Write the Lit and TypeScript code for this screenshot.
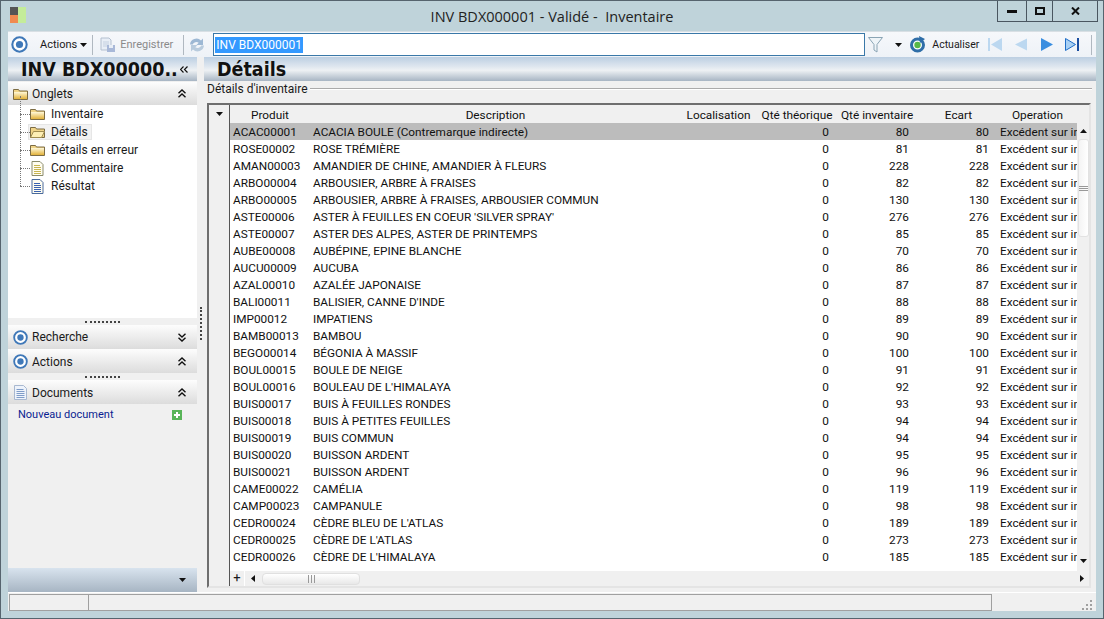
import { LitElement, html, css, svg } from "lit";
import { customElement } from "lit/decorators.js";

const rows: [string, string, number][] = [
  ["ACAC00001", "ACACIA BOULE (Contremarque indirecte)", 80],
  ["ROSE00002", "ROSE TRÉMIÈRE", 81],
  ["AMAN00003", "AMANDIER DE CHINE, AMANDIER À FLEURS", 228],
  ["ARBO00004", "ARBOUSIER, ARBRE À FRAISES", 82],
  ["ARBO00005", "ARBOUSIER, ARBRE À FRAISES, ARBOUSIER COMMUN", 130],
  ["ASTE00006", "ASTER À FEUILLES EN COEUR 'SILVER SPRAY'", 276],
  ["ASTE00007", "ASTER DES ALPES, ASTER DE PRINTEMPS", 85],
  ["AUBE00008", "AUBÉPINE, EPINE BLANCHE", 70],
  ["AUCU00009", "AUCUBA", 86],
  ["AZAL00010", "AZALÉE JAPONAISE", 87],
  ["BALI00011", "BALISIER, CANNE D'INDE", 88],
  ["IMP00012", "IMPATIENS", 89],
  ["BAMB00013", "BAMBOU", 90],
  ["BEGO00014", "BÉGONIA À MASSIF", 100],
  ["BOUL00015", "BOULE DE NEIGE", 91],
  ["BOUL00016", "BOULEAU DE L'HIMALAYA", 92],
  ["BUIS00017", "BUIS À FEUILLES RONDES", 93],
  ["BUIS00018", "BUIS À PETITES FEUILLES", 94],
  ["BUIS00019", "BUIS COMMUN", 94],
  ["BUIS00020", "BUISSON ARDENT", 95],
  ["BUIS00021", "BUISSON ARDENT", 96],
  ["CAME00022", "CAMÉLIA", 119],
  ["CAMP00023", "CAMPANULE", 98],
  ["CEDR00024", "CÈDRE BLEU DE L'ATLAS", 189],
  ["CEDR00025", "CÈDRE DE L'ATLAS", 273],
  ["CEDR00026", "CÈDRE DE L'HIMALAYA", 185],
];

const folder = (open = false) => svg`<svg class="ic" width="15" height="12" viewBox="0 0 15 12">
  <defs><linearGradient id="fg" x1="0" y1="0" x2="0" y2="1"><stop offset="0" stop-color="#fff8d8"/><stop offset="1" stop-color="#e2b23c"/></linearGradient></defs>
  <path d="M.5 1.500h5l1 1.500h8v8.500H.5z" fill="#f0d488" stroke="#7c6c44"/>
  ${open
    ? svg`<path d="M.5 11.500l3-6h11l-3 6z" fill="#fdeeb4" stroke="#a08c50"/>`
    : svg`<rect x="1" y="4" width="13" height="7" fill="url(#fg)"/>`}
</svg>`;

const doc = (dark = false) => svg`<svg class="ic" width="12" height="15" viewBox="0 0 12 15">
  <path d="M.5.5h8l3 3v11H.5z" fill="#fffdf0" stroke="${dark ? "#4a6a9c" : "#8a8a6a"}"/>
  <path d="M2.500 4.500h6M2.500 6.500h7M2.500 8.500h7M2.500 10.500h7M2.500 12.500h7" stroke="${dark ? "#3a62b0" : "#c8b450"}"/>
</svg>`;

const docBlue = svg`<svg class="ic" width="13" height="15" viewBox="0 0 13 15">
  <path d="M.5.5h9l3 3v11H.5z" fill="#eef3fb" stroke="#a8b8d0"/>
  <path d="M2.500 4.500h7M2.500 6.500h8M2.500 8.500h8M2.500 10.500h8M2.500 12.500h8" stroke="#7f9cc8"/>
</svg>`;

const target = (s = 17) => svg`<svg width="${s}" height="${s}" viewBox="0 0 18 18">
  <circle cx="9" cy="9" r="7.600" fill="#fff" stroke="#3f78b8" stroke-width="2.200"/>
  <circle cx="9" cy="9" r="3.800" fill="#3f78b8"/>
</svg>`;

const chevUp = svg`<svg width="8" height="9" viewBox="0 0 8 9"><path d="M.5 4.200L4 1l3.500 3.200M.5 8.200L4 5l3.500 3.200" fill="none" stroke="#111" stroke-width="1.400"/></svg>`;
const chevDown = svg`<svg width="8" height="9" viewBox="0 0 8 9"><path d="M.5.800L4 4l3.500-3.200M.5 4.800L4 8l3.500-3.200" fill="none" stroke="#111" stroke-width="1.400"/></svg>`;
const caret = svg`<svg width="7" height="4" viewBox="0 0 7 4"><path d="M0 0h7L3.500 4z" fill="#111"/></svg>`;

@customElement("app-root")
export class AppRoot extends LitElement {
  static styles = css`
    :host { display: block; width: 1104px; height: 619px; overflow: hidden; font-family: Roboto, "Noto Sans", sans-serif; font-size: 12px; color: #1a1a1a; }
    * { box-sizing: border-box; }
    .win { width: 1104px; height: 619px; background: #bfd3da; border: 1px solid #56646e; display: flex; flex-direction: column; padding: 0 7px 7px; }
    .titlebar { height: 30px; flex: none; display: flex; position: relative; align-items: center; justify-content: center; font-size: 14.500px; color: #222; font-family: "Open Sans", "Noto Sans", sans-serif; white-space: pre; }
    .logo { position: absolute; left: 2px; top: 6px; width: 16px; height: 16px; display: grid; grid-template-columns: 8px 8px; grid-template-rows: 8px 8px; }
    .btns { position: absolute; right: -2px; top: 0; height: 21px; display: flex; border: 1px solid #4a5660; border-top: none; }
    .btns div { display: flex; align-items: center; justify-content: center; border-left: 1px solid #4a5660; }
    .btns div:first-child { width: 28px; border-left: none; }
    .btns div:nth-child(2) { width: 26px; }
    .btns div:nth-child(3) { width: 45px; }
    .content { flex: 1; display: flex; flex-direction: column; background: #f0f0f0; min-height: 0; }
    .toolbar { height: 26px; flex: none; display: flex; align-items: center; background: linear-gradient(#f6f8fb, #eef2f7); border-top: 1px solid #d8dfe4; font-size: 11px; padding-left: 3px; }
    .sep { width: 1px; height: 20px; background: #b0b8c0; flex: none; }
    .disabled { color: #8a8a8a; }
    .search { width: 652px; height: 23px; border: 1px solid #3a78a8; background: #fff; display: flex; align-items: center; padding-left: 1px; font-size: 12px; margin: 0 3px 0 8px; flex: none; }
    .search span { background: #3399ff; color: #fff; padding: 0 1px; line-height: 16px; }
    .nav { display: flex; flex: none; margin-left: 9px; }
    .panes { flex: 1; display: flex; min-height: 0; }
    .side { width: 189px; flex: none; display: flex; flex-direction: column; }
    .bluehead { height: 24px; flex: none; background: linear-gradient(#bccfe2 0%, #dfe7ef 40%, #eef1f4 55%, #a7b5c3 100%); font-weight: 700; font-size: 19.500px; line-height: 25px; color: #111; font-family: "DejaVu Sans Condensed", "Noto Sans", sans-serif; position: relative; }
    .sidetitle { padding-left: 13px; white-space: nowrap; }
    .dbl { position: absolute; right: 9px; top: 9px; line-height: 0; }
    .sect { height: 24px; flex: none; background: linear-gradient(#fdfdfd, #dcdcdc); display: flex; align-items: center; padding: 0 11px 0 5px; font-size: 12px; gap: 4px; }
    .sect .lbl { flex: 1; }
    .sect .low { padding-top: 2px; }
    .sect > svg:first-child { width: 15px; flex: none; }
    .first { height: 23px; margin-top: 1px; }
    .tree { height: 213px; flex: none; background: #fff; padding: 0 0 0 12px; }
    .tree-row { height: 18px; display: flex; align-items: center; position: relative; padding-left: 10px; gap: 6px; }
    .tree-row::before { content: ""; position: absolute; left: 0; top: 9px; width: 10px; border-top: 1px dotted #777; }
    .tree-row::after { content: ""; position: absolute; left: 0; top: -9px; height: 18px; border-left: 1px dotted #777; }
    .tree-row .ic { flex: none; width: 15px; }
    .selbox { display: flex; align-items: center; gap: 6px; background: #f2f2f2; border: 1px solid #e6e6e6; height: 16px; padding: 0 3px 0 1px; margin-left: -2px; }
    .dots { height: 7px; flex: none; display: flex; align-items: center; justify-content: center; }
    .dots i { width: 35px; border-top: 2px dotted #444; }
    .docs { flex: 1; padding: 3px 15px 0 10px; color: #0a1e90; font-size: 11px; display: flex; justify-content: space-between; align-items: flex-start; line-height: 15px; }
    .plus { margin-top: 3px; }
    .bottom { height: 24px; flex: none; background: linear-gradient(#d8e3ee, #a7b5c3); display: flex; justify-content: flex-end; align-items: center; padding-right: 11px; }
    .split { width: 7px; flex: none; position: relative; }
    .split i { position: absolute; left: 3px; top: 250px; height: 33px; border-left: 2px dotted #444; }
    .main { flex: 1; min-width: 0; display: flex; flex-direction: column; }
    .maintitle { padding-left: 13px; }
    .legend { height: 22px; flex: none; display: flex; align-items: center; padding: 0 4px 6px 3px; gap: 2px; }
    .legend i { flex: 1; border-top: 1px solid #aaa; border-bottom: 1px solid #fff; }
    .gridbox { margin: 0 5px 0 3px; height: 485px; flex: none; border: 2px solid #6e6e6e; border-right-color: #e4e4e4; border-bottom-color: #e4e4e4; display: flex; background: #f0f0f0; }
    .rowhdr { width: 21px; flex: none; border-right: 1px solid #555; }
    .rowhdr .top { height: 18px; display: flex; align-items: center; justify-content: center; }
    .gridmain { flex: 1; min-width: 0; display: flex; flex-direction: column; }
    .upper { flex: 1; display: flex; min-height: 0; }
    .table { width: 847px; flex: none; overflow: hidden; background: #fff; }
    .tr { display: grid; grid-template-columns: 80px 371px 75px 80px 80px 80px 81px; height: 17px; white-space: nowrap; line-height: 19px; font-size: 11.800px; color: #111; }
    .tr.head { height: 18px; line-height: 21px; background: #f0f0f0; }
    .tr.head div { text-align: center; overflow: hidden; }
    .tr.head div:nth-child(n+4) { padding-left: 5px; }
    .tr.head div:nth-child(6) { padding-left: 8px; }
    .tr.selrow { background: #bcbcbc; }
    .tr div { padding: 0 3px; overflow: hidden; }
    .tr div.num { text-align: right; padding-right: 7px; }
    .tr div.op { padding-left: 4px; }
    .vbar { flex: 1; background: #f0f0f0; display: flex; flex-direction: column; align-items: center; }
    .vbtn { height: 16px; width: 12px; display: flex; align-items: center; justify-content: center; flex: none; }
    .thumb { width: 11px; height: 98px; background: linear-gradient(90deg, #f4f4f4, #fff); border: 1px solid #e2e2e2; border-radius: 3px; display: flex; align-items: center; justify-content: center; margin-bottom: auto; }
    .hbar { height: 15px; flex: none; display: flex; align-items: center; background: #f0f0f0; }
    .hbar-plus { width: 15px; height: 15px; flex: none; text-align: center; line-height: 13px; font-size: 13px; border-right: 1px solid #fff; }
    .harr { width: 15px; height: 15px; display: flex; align-items: center; justify-content: center; flex: none; }
    .hthumb { width: 98px; height: 12px; background: linear-gradient(#fff, #e8e8e8); border: 1px solid #e0e0e0; border-radius: 4px; margin-left: 2px; display: flex; align-items: center; justify-content: center; }
    .status { height: 19px; flex: none; background: #f0f0f0; display: flex; border-top: 1px solid #fff; padding: 1px 0 1px 1px; }
    .status div { border: 1px solid #a0a0a0; height: 17px; }
    .status .s1 { width: 80px; }
    .status .s2 { width: 903px; border-left: none; }
    .status .s3 { flex: 1; border: none; position: relative; }
    .grip { position: absolute; right: 4px; bottom: 1px; }
    .c-text { white-space: nowrap; }
    .tight { font-size: 10.500px; }
    .box { display: flex; flex: none; }
  `;

  render() {
    return html`<div class="win">
      <div class="titlebar">
        <div class="logo"><span style="background:#555"></span><span style="background:#c4ec9a"></span><span style="background:#f08a50"></span><span style="background:#c4ec9a"></span></div>
        <span>INV BDX000001 - Validé -  Inventaire</span>
        <div class="btns">
          <div><svg width="10" height="3"><rect width="10" height="3" fill="#111"/></svg></div>
          <div><svg width="10" height="8"><rect x="1" y="1" width="8" height="6" fill="none" stroke="#111" stroke-width="2"/></svg></div>
          <div><svg width="9" height="8" viewBox="0 0 9 8"><path d="M1 .5l7 7M8 .5l-7 7" stroke="#111" stroke-width="2"/></svg></div>
        </div>
      </div>
      <div class="content">
        <div class="toolbar">
          ${target(17)}
          <span class="c-text" style="margin-left:12px">Actions</span>
          <span class="box" style="margin:0 5px 0 3px">${caret}</span>
          <div class="sep"></div>
          <span class="box" style="margin:0 4px 0 7px"><svg width="16" height="16" viewBox="0 0 16 16"><path d="M1 1h8l2 2v10H1z" fill="#e8eef6" stroke="#b4c0d0"/><path d="M3 5h6M3 7h6M3 9h4" stroke="#c4d0e0"/><rect x="7" y="8" width="8" height="7" fill="#a8b8d8"/><rect x="9" y="8" width="4" height="3" fill="#e8eef6"/></svg></span>
          <span class="disabled c-text">Enregistrer</span>
          <div class="sep" style="margin-left:10px"></div>
          <span class="box" style="margin-left:5px"><svg width="16" height="16" viewBox="0 0 16 16"><path d="M1 7.500a6.500 6.500 0 0 1 11-4l2-2v6.500H7.500l2.200-2.200a4 4 0 0 0-6 1.700z" fill="#9db8d4"/><path d="M15 8.500a6.500 6.500 0 0 1-11 4l-2 2V8h6.500l-2.200 2.200a4 4 0 0 0 6-1.700z" fill="#b8cbdd"/></svg></span>
          <div class="search"><span>INV BDX000001</span></div>
          <svg width="15" height="16" viewBox="0 0 15 16"><path d="M.5.5h14L9 7.500V15l-3-2V7.500z" fill="#eef4f8" stroke="#8aa4b4"/></svg>
          <span class="box" style="margin:0 7px 0 12px">${caret}</span>
          <svg width="17" height="17" viewBox="0 0 17 17"><circle cx="8.500" cy="9" r="6" fill="#fff" stroke="#2f6ea8" stroke-width="3"/><circle cx="8.500" cy="9" r="3.200" fill="#58b848"/><path d="M10 0l6 3-5 4z" fill="#2f6ea8"/></svg>
          <span class="c-text tight" style="margin-left:6px">Actualiser</span>
          <div class="nav" style="gap:12px">
            <svg width="14" height="15" viewBox="0 0 14 15"><rect x="0" y="1" width="2" height="13" fill="#bcd8f0"/><path d="M14 1v13L3 7.500z" fill="#bcd8f0"/></svg>
            <svg width="12" height="15" viewBox="0 0 12 15" style="margin-left:1px"><path d="M12 1.500v12L0 7.500z" fill="#bcd8f0"/></svg>
            <svg width="12" height="15" viewBox="0 0 12 15" style="margin-left:2px"><path d="M0 1v13l12-6.500z" fill="#3a8ee0"/></svg>
            <svg width="14" height="15" viewBox="0 0 14 15"><path d="M.5 1.500v12l10-6z" fill="#a8d0f4" stroke="#1f6ec8"/><rect x="12" y="1" width="2" height="13" fill="#1a4ea0"/></svg>
          </div>
          <div class="sep" style="margin-left:12px"></div>
        </div>
        <div class="panes">
          <div class="side">
            <div class="bluehead"><div class="sidetitle">INV BDX00000..</div><span class="dbl"><svg width="8" height="7" viewBox="0 0 8 7"><path d="M3.500.5L.5 3.500l3 3M7.500.5l-3 3 3 3" fill="none" stroke="#111" stroke-width="1.200"/></svg></span></div>
            <div class="sect first">${folder()}<span class="lbl">Onglets</span>${chevUp}</div>
            <div class="tree">
              <div class="tree-row">${folder()}<span>Inventaire</span></div>
              <div class="tree-row"><span class="selbox">${folder(true)}<span>Détails</span></span></div>
              <div class="tree-row">${folder()}<span>Détails en erreur</span></div>
              <div class="tree-row">${doc()}<span>Commentaire</span></div>
              <div class="tree-row">${doc(true)}<span>Résultat</span></div>
            </div>
            <div class="dots"><i></i></div>
            <div class="sect">${target(15)}<span class="lbl">Recherche</span>${chevDown}</div>
            <div class="sect">${target(15)}<span class="lbl low">Actions</span>${chevUp}</div>
            <div class="dots"><i></i></div>
            <div class="sect">${docBlue}<span class="lbl low">Documents</span>${chevUp}</div>
            <div class="docs"><span>Nouveau document</span>
              <svg class="plus" width="10" height="10" viewBox="0 0 10 10"><rect width="10" height="10" fill="#58b458"/><path d="M2 5h6M5 2v6" stroke="#fff" stroke-width="2"/></svg></div>
            <div class="bottom">${caret}</div>
          </div>
          <div class="split"><i></i></div>
          <div class="main">
            <div class="bluehead"><div class="maintitle">Détails</div></div>
            <div class="legend"><span class="c-text">Détails d'inventaire</span><i></i></div>
            <div class="gridbox">
              <div class="rowhdr"><div class="top">${caret}</div></div>
              <div class="gridmain">
                <div class="upper">
                  <div class="table">
                    <div class="tr head"><div>Produit</div><div>Description</div><div>Localisation</div><div>Qté théorique</div><div>Qté inventaire</div><div>Ecart</div><div>Operation</div></div>
                    ${rows.map((r, i) => html`<div class="tr ${i === 0 ? "selrow" : ""}"><div>${r[0]}</div><div>${r[1]}</div><div></div><div class="num">0</div><div class="num">${r[2]}</div><div class="num">${r[2]}</div><div class="op">Excédent sur inventaire</div></div>`)}
                  </div>
                  <div class="vbar">
                    <div style="height:18px;flex:none"></div>
                    <div class="vbtn"><svg width="7" height="4" viewBox="0 0 7 4"><path d="M0 4h7L3.500 0z" fill="#111"/></svg></div>
                    <div class="thumb"><svg width="9" height="5"><path d="M0 .5h9M0 2.500h9M0 4.500h9" stroke="#999"/></svg></div>
                    <div class="vbtn">${caret}</div>
                    <div style="height:2px;flex:none"></div>
                  </div>
                </div>
                <div class="hbar">
                  <div class="hbar-plus">+</div>
                  <div class="harr"><svg width="4" height="7" viewBox="0 0 4 7"><path d="M4 0v7L0 3.500z" fill="#111"/></svg></div>
                  <div class="hthumb"><svg width="7" height="8"><path d="M.5 0v8M3.500 0v8M6.500 0v8" stroke="#999"/></svg></div>
                  <div style="flex:1"></div>
                  <div class="harr"><svg width="4" height="7" viewBox="0 0 4 7"><path d="M0 0v7l4-3.500z" fill="#111"/></svg></div>
                </div>
              </div>
            </div>
          </div>
        </div>
        <div class="status">
          <div class="s1"></div><div class="s2"></div>
          <div class="s3"><svg class="grip" width="10" height="11"><path d="M8 1h2v2H8zM4 5h2v2H4zM8 5h2v2H8zM0 9h2v2H0zM4 9h2v2H4zM8 9h2v2H8z" fill="#a0a0a0"/></svg></div>
        </div>
      </div>
    </div>`;
  }
}
